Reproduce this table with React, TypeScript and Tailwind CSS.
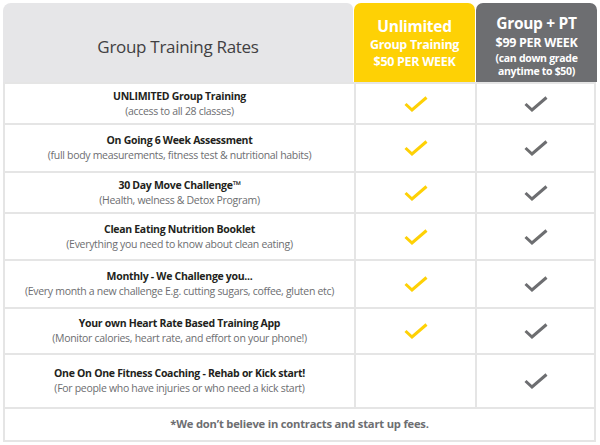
import React from "react";

const Check = ({ color }: { color: string }) => (
  <svg width="24" height="16" viewBox="0 0 24 16" fill="none">
    <path d="M1.5 8 L8 14 L22.5 1.5" stroke={color} strokeWidth="3" strokeLinecap="butt" strokeLinejoin="miter" />
  </svg>
);

const rows: { t: string; s: string; h: string; y: boolean }[] = [
  { t: "UNLIMITED Group Training", s: "(access to all 28 classes)", h: "h-[41px]", y: true },
  { t: "On Going 6 Week Assessment", s: "(full body measurements, fitness test & nutritional habits)", h: "h-[48px]", y: true },
  { t: "30 Day Move Challenge™", s: "(Health, welness & Detox Program)", h: "h-[41px]", y: true },
  { t: "Clean Eating Nutrition Booklet", s: "(Everything you need to know about clean eating)", h: "h-[47px]", y: true },
  { t: "Monthly - We Challenge you...", s: "(Every month a new challenge E.g. cutting sugars, coffee, gluten etc)", h: "h-[48px]", y: true },
  { t: "Your own Heart Rate Based Training App", s: "(Monitor calories, heart rate, and effort on your phone!)", h: "h-[46px]", y: true },
  { t: "One On One Fitness Coaching - Rehab or Kick start!", s: "(For people who have injuries or who need a kick start)", h: "h-[54px]", y: false },
];

export default function App() {
  return (
    <div className="w-[600px] h-[445px] bg-white" style={{ fontFamily: "'Open Sans', 'Noto Sans', sans-serif" }}>
      <div className="pt-[3px] pl-[3px] w-[597px]">
        <div className="flex h-[79px] gap-[1px]">
          <div className="w-[350px] bg-[#e6e6e8] rounded-tl-[8px] rounded-tr-[6px] flex items-center justify-center pt-[8px]">
            <span className="text-[17px] text-[#414042] tracking-[-0.3px]">Group Training Rates</span>
          </div>
          <div className="w-[121px] bg-[#fed105] rounded-t-[7px] flex flex-col items-center justify-center text-white font-bold leading-none pt-[2px]">
            <span className="text-[15.5px] tracking-[-0.3px]">Unlimited</span>
            <span className="text-[12.5px] mt-[5px] tracking-[-0.3px]">Group Training</span>
            <span className="text-[12.5px] mt-[4px] tracking-[-0.3px]">$50 PER WEEK</span>
          </div>
          <div className="w-[121px] bg-[#6d6e71] rounded-t-[7px] flex flex-col items-center justify-center text-white font-bold leading-none pt-[7px]">
            <span className="text-[15.5px] tracking-[-0.3px]">Group + PT</span>
            <span className="text-[12.5px] mt-[5px] tracking-[-0.3px]">$99 PER WEEK</span>
            <span className="text-[10.5px] mt-[4px] tracking-[-0.3px]">(can down grade</span>
            <span className="text-[10.5px] mt-[2px] tracking-[-0.3px]">anytime to $50)</span>
          </div>
        </div>
        <div className="w-[593px] border-x-2 border-[#e5e5e5]">
          {rows.map((r, i) => (
            <div key={i} className={`flex ${r.h} border-t-2 border-[#e5e5e5]`}>
              <div className="w-[349px] flex flex-col items-center justify-center leading-[15px] tracking-[-0.3px]">
                <span className="text-[10.5px] font-bold text-[#231f20]">{r.t}</span>
                <span className="text-[10.5px] text-[#6d6e71]">{r.s}</span>
              </div>
              <div className="w-[121px] border-l-2 border-[#e5e5e5] flex items-center justify-center">
                {r.y && <Check color="#fed105" />}
              </div>
              <div className="flex-1 border-l-2 border-[#e5e5e5] flex items-center justify-center">
                <Check color="#6d6e71" />
              </div>
            </div>
          ))}
          <div className="h-[35px] border-y-2 border-[#e5e5e5] flex items-center justify-center">
            <span className="text-[11.2px] font-bold text-[#6d6e71] tracking-[-0.2px]">*We don’t believe in contracts and start up fees.</span>
          </div>
        </div>
      </div>
    </div>
  );
}
